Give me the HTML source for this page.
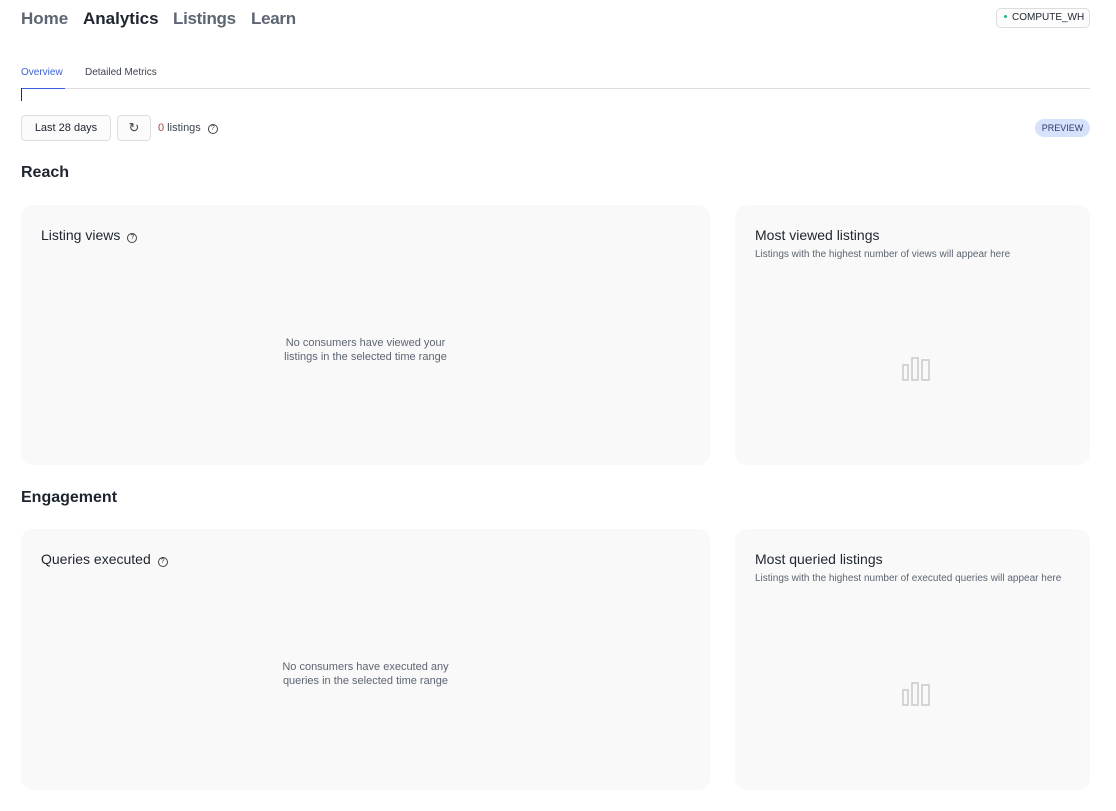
<!DOCTYPE html>
<html><head><style>
*{box-sizing:border-box;margin:0;padding:0}
body{width:1116px;height:811px;background:#fff;font-family:"Liberation Sans",sans-serif;color:#1e252f;position:relative;overflow:hidden}
.a{position:absolute;white-space:nowrap}
.nav{top:9px;font-size:17px;font-weight:bold;color:#5d6573}
.card{position:absolute;background:#f9f9f9;border-radius:12px}
.ct{font-size:14px;color:#1e252f}
.sub{font-size:10px;color:#5d6573}
.msg{font-size:11px;color:#5d6573;text-align:center;line-height:14px}
.q{display:inline-block;width:10px;height:10px;border:1px solid #444;border-radius:50%;font-size:7px;text-align:center;line-height:8px;vertical-align:1px;margin-left:7px}
</style></head><body>
<div class="a nav" style="left:21px">Home</div>
<div class="a nav" style="left:83px;color:#1e252f">Analytics</div>
<div class="a nav" style="left:173px;letter-spacing:-0.3px">Listings</div>
<div class="a nav" style="left:251px;letter-spacing:-0.3px">Learn</div>
<div class="a" style="left:996px;top:8px;width:94px;height:20px;border:1px solid #ddd;border-radius:5px;font-size:10px;line-height:18px;padding-left:7px;background:#fcfcfc"><span style="display:inline-block;width:3px;height:3px;background:#1fb48a;border-radius:50%;vertical-align:2px;margin-right:5px"></span>COMPUTE_WH</div>
<div class="a" style="left:21px;top:67px;font-size:10px;color:#3a62d8">Overview</div>
<div class="a" style="left:85px;top:67px;font-size:10px;color:#3c4350">Detailed Metrics</div>
<div class="a" style="left:21px;top:88px;width:1069px;height:1px;background:#ddd"></div>
<div class="a" style="left:21px;top:88px;width:44px;height:1px;background:#3a62d8"></div>
<div class="a" style="left:21px;top:88px;width:1px;height:13px;background:#333"></div>
<div class="a" style="left:21px;top:115px;width:90px;height:26px;border:1px solid #ddd;border-radius:4px;font-size:11px;line-height:24px;text-align:center;background:#fbfbfb">Last 28 days</div>
<div class="a" style="left:117px;top:115px;width:34px;height:26px;border:1px solid #ddd;border-radius:4px;font-size:13px;line-height:24px;text-align:center;background:#fbfbfb;color:#444">↻</div>
<div class="a" style="left:158px;top:122px;font-size:11px;color:#3c4350"><span style="color:#a44">0</span> listings<span class="q">?</span></div>
<div class="a" style="left:1035px;top:119px;width:55px;height:18px;background:#d6e2fb;border-radius:9px;font-size:9px;line-height:18px;text-align:center;color:#2a3a6a">PREVIEW</div>
<div class="a" style="left:21px;top:164px;font-size:16px;font-weight:bold">Reach</div>
<div class="card" style="left:21px;top:205px;width:689px;height:260px">
<div class="a ct" style="left:20px;top:22px">Listing views<span class="q">?</span></div>
<div class="a msg" style="left:0;width:689px;top:131px">No consumers have viewed your<br>listings in the selected time range</div></div>
<div class="card" style="left:735px;top:205px;width:355px;height:260px">
<div class="a ct" style="left:20px;top:22px">Most viewed listings</div>
<div class="a sub" style="left:20px;top:44px">Listings with the highest number of views will appear here</div>
<svg class="a" style="left:166px;top:151px" width="32" height="26"><g fill="none" stroke="#ccc" stroke-width="1.6"><rect x="2" y="9" width="5" height="15"/><rect x="11" y="2" width="6" height="22"/><rect x="21" y="4" width="7" height="20"/></g></svg></div>
<div class="a" style="left:21px;top:489px;font-size:16px;font-weight:bold">Engagement</div>
<div class="card" style="left:21px;top:529px;width:689px;height:261px">
<div class="a ct" style="left:20px;top:22px">Queries executed<span class="q">?</span></div>
<div class="a msg" style="left:0;width:689px;top:131px">No consumers have executed any<br>queries in the selected time range</div></div>
<div class="card" style="left:735px;top:529px;width:355px;height:261px">
<div class="a ct" style="left:20px;top:22px">Most queried listings</div>
<div class="a sub" style="left:20px;top:44px">Listings with the highest number of executed queries will appear here</div>
<svg class="a" style="left:166px;top:152px" width="32" height="26"><g fill="none" stroke="#ccc" stroke-width="1.6"><rect x="2" y="9" width="5" height="15"/><rect x="11" y="2" width="6" height="22"/><rect x="21" y="4" width="7" height="20"/></g></svg></div>
</body></html>
